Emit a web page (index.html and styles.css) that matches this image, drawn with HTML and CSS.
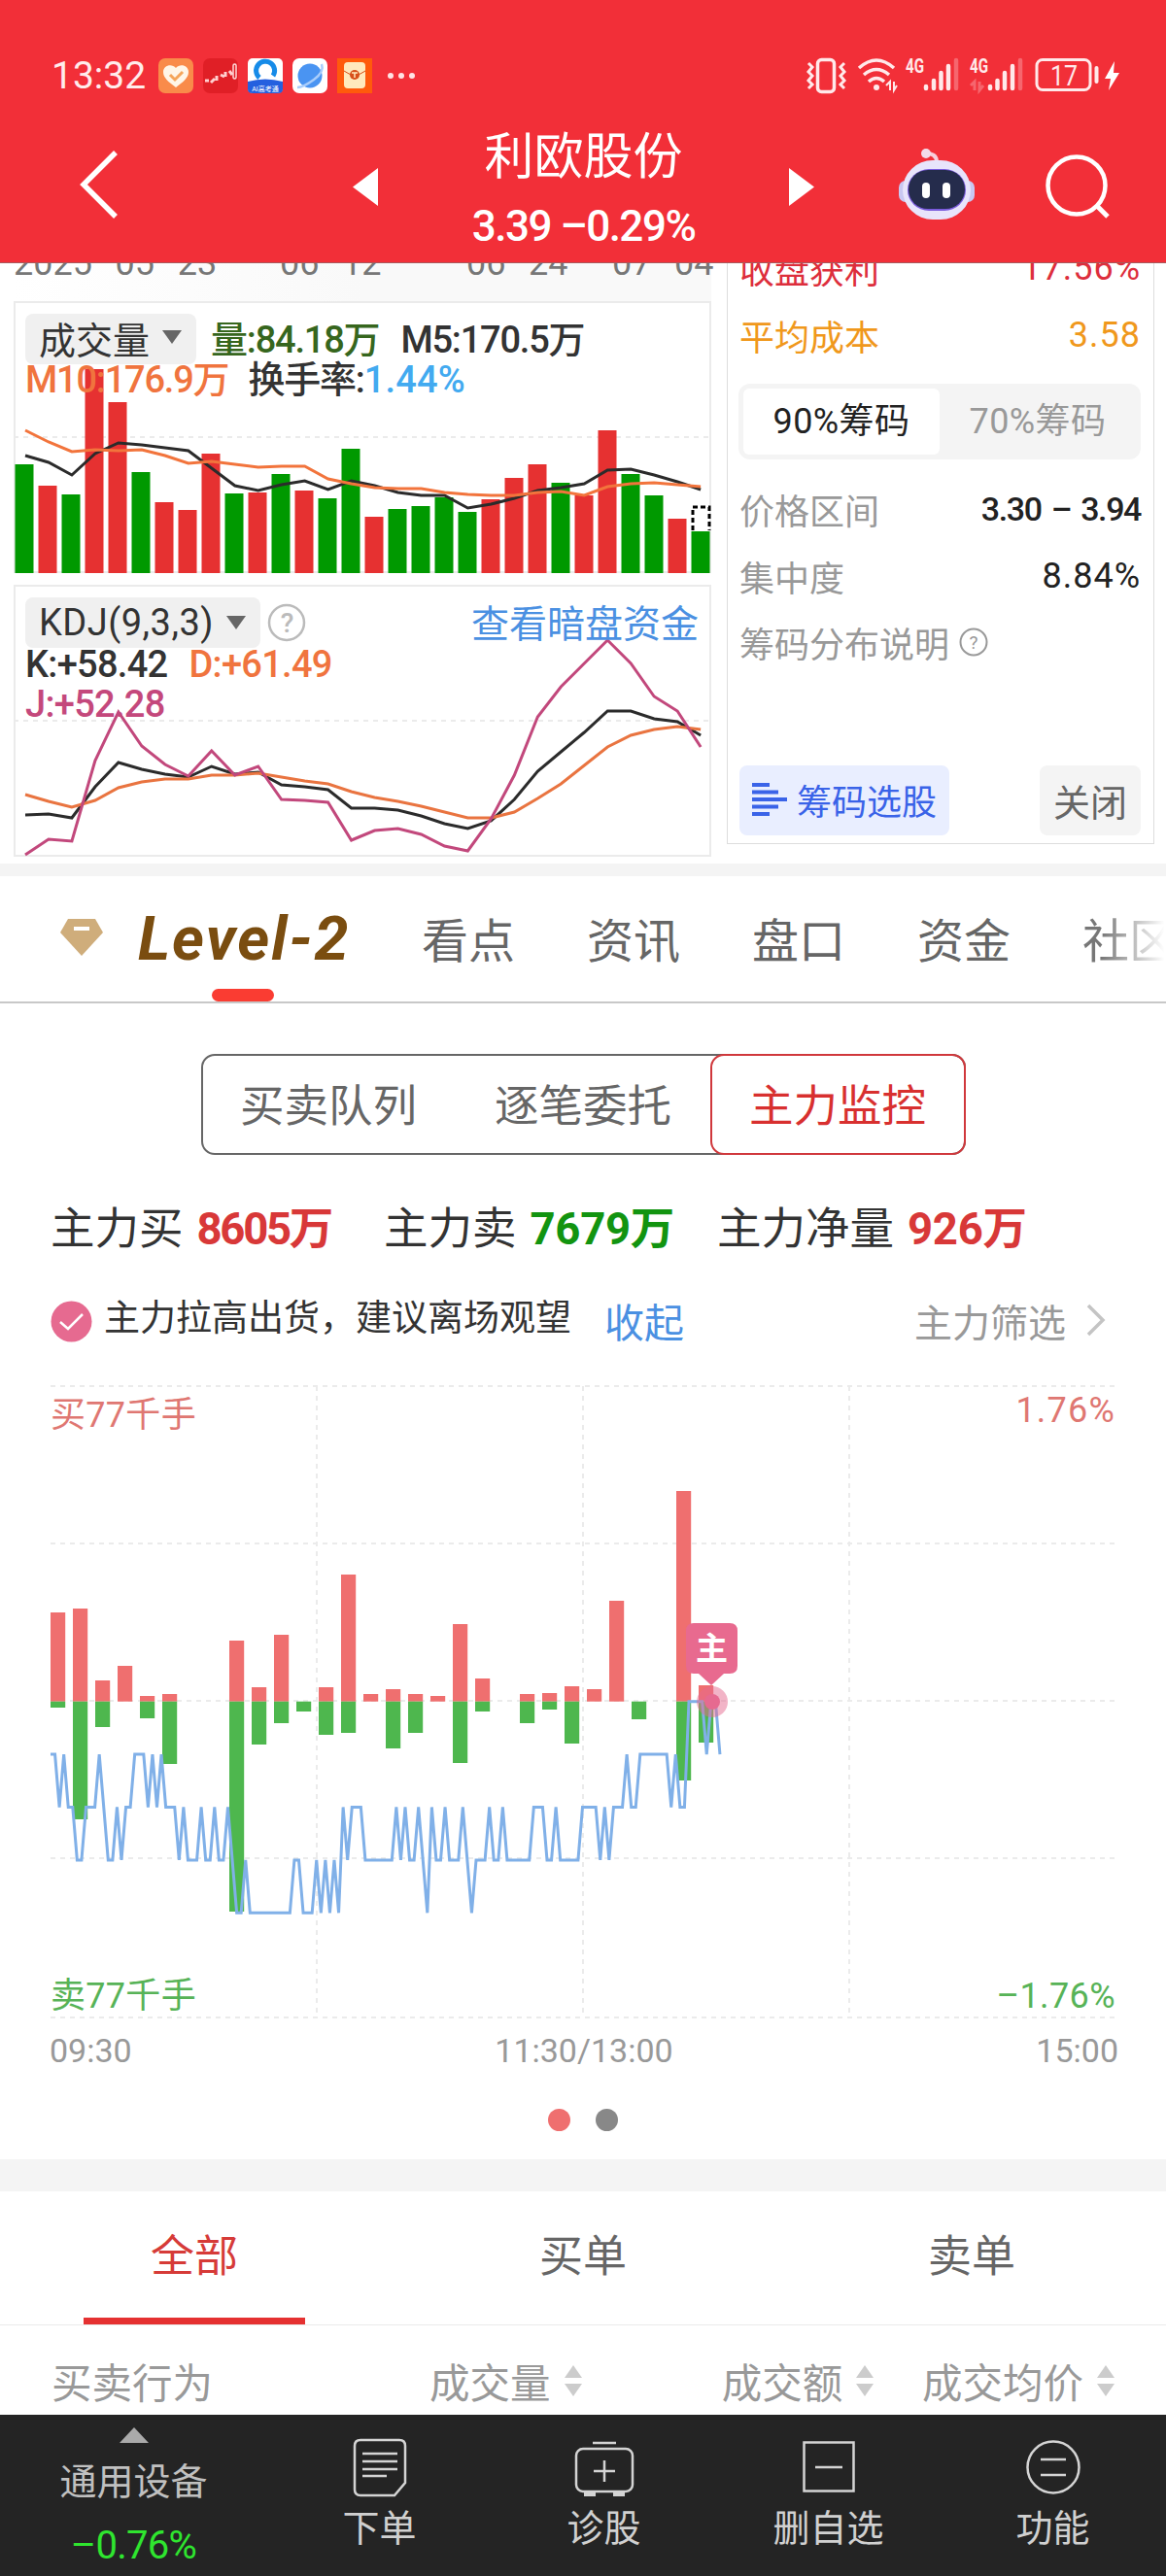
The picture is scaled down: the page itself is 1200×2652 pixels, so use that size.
FILE: index.html
```html
<!DOCTYPE html>
<html lang="zh-CN">
<head>
    <meta charset="UTF-8">
    <meta name="viewport" content="width=device-width, initial-scale=1.0">
    <title>利欧股份</title>
    <link rel="stylesheet" href="styles.css">
</head>
<body>
    <header>
        <div class="status-bar">
            <span class="clock">13:32</span>
            <div class="app-icons">
                <svg width="36" height="36" viewBox="0 0 36 36"><rect width="36" height="36" rx="7" fill="#f98b4a"/><path d="M18 30C10 24 5 20 5 14c0-7 9-9 13-4 4-5 13-3 13 4 0 6-5 10-13 16z" fill="#fff6e8"/><path d="M12 17l5 5 8-8" fill="none" stroke="#f5a55a" stroke-width="3"/></svg>
                <svg width="36" height="36" viewBox="0 0 36 36"><rect width="36" height="36" rx="7" fill="#e01f26"/><path d="M2 23h4M8 25l4-4M14 18v5M18 17l4 2M23 14v5M27 13l3 4" fill="none" stroke="#ffd0d0" stroke-width="3"/><rect x="31" y="6" width="3" height="15" rx="1.500" fill="none" stroke="#ffd9d9" stroke-width="1.500"/></svg>
                <svg width="36" height="36" viewBox="0 0 36 36"><rect width="36" height="36" rx="5" fill="#fff"/><path d="M12 20a9.500 9.500 0 1 1 14-2" fill="none" stroke="#168be8" stroke-width="5"/><path d="M0 24q18-5 36 0v8q0 4-5 4H5q-5 0-5-4z" fill="#2460df"/><text x="18" y="34" text-anchor="middle" class="app-tag">AI高考通</text></svg>
                <svg width="36" height="36" viewBox="0 0 36 36"><rect width="36" height="36" rx="7" fill="#fff"/><circle cx="18" cy="18" r="12.500" fill="#4a94f2"/><path d="M30 6q3 8-8 16T5 30" fill="none" stroke="#a9cdfb" stroke-width="2.500"/></svg>
                <svg width="36" height="36" viewBox="0 0 36 36"><rect width="36" height="36" fill="#ff5a0c"/><rect x="7" y="4" width="22" height="27" rx="4" fill="#ffe9bd"/><path d="M7 13l7 4h8l7-4" fill="none" stroke="#d8501a"/><circle cx="18" cy="17" r="5" fill="#d8501a"/><path d="M15 15h6M18 15v5" stroke="#ffe9bd" stroke-width="1.500"/></svg>
            </div>
            <svg class="more" width="28" height="8" viewBox="0 0 28 8" fill="#ffe3e4"><circle cx="3" cy="4" r="3"/><circle cx="14" cy="4" r="3"/><circle cx="25" cy="4" r="3"/></svg>
            <svg class="signals" width="324" height="40" viewBox="829 58 324 40" fill="none" stroke="#ffe9ea">
                <rect x="841.500" y="61.500" width="17" height="33" rx="4" stroke-width="3.500"/>
                <path d="M832 65l4 4-4 5 4 4-4 5 4 4-4 4M869 65l-4 4 4 5-4 4 4 5-4 4 4 4" stroke-width="3"/>
                <path d="M884 70q18-16 36 0M889 77q13-11 26 0M894 84q8-7 16 0" stroke-width="3.500"/>
                <circle cx="902" cy="90" r="3" fill="#ffe9ea" stroke="none"/>
                <path d="M912 88l4-4v9M920 84v9l3-5" stroke-width="2"/>
                <g stroke-width="4.500" stroke-linecap="round">
                    <path d="M953 89v2M961 83v8M968.500 75v16M976 68v23"/><path d="M984 62v29" opacity=".3"/>
                    <path d="M1019 89v2M1026.500 83v8M1034 75v16M1042 68v23"/><path d="M1050 62v29" opacity=".3"/>
                </g>
                <path d="M999 88l4-4v9M1008 84v9l4-5" stroke-width="3" opacity=".3"/>
                <text x="932" y="75" class="net" textLength="19" lengthAdjust="spacingAndGlyphs">4G</text>
                <text x="998" y="75" class="net" textLength="19" lengthAdjust="spacingAndGlyphs">4G</text>
                <rect x="1067" y="61.500" width="55" height="31" rx="6" stroke-width="3"/>
                <text x="1081" y="88" class="battery" textLength="28" lengthAdjust="spacingAndGlyphs">17</text>
                <path d="M1128.500 70v14" stroke-width="4" stroke-linecap="round"/>
                <path d="M1147 63l-10 18h6l-2 12 11-18h-6z" fill="#fff" stroke="none"/>
            </svg>
        </div>
        <div class="title-bar">
            <svg class="back" width="42" height="72" viewBox="0 0 42 72"><path d="M38 3L5 36l33 33" fill="none" stroke="#fff" stroke-width="5.500"/></svg>
            <svg width="26" height="39" viewBox="0 0 26 39"><path d="M26 0v39L0 19.500z" fill="#fff"/></svg>
            <div class="stock">
                <div class="stock-name">利欧股份</div>
                <div class="stock-price">3.39 –0.29%</div>
            </div>
            <svg width="26" height="39" viewBox="0 0 26 39"><path d="M0 0v39l26-19.500z" fill="#fff"/></svg>
            <svg class="robot" width="80" height="74" viewBox="0 0 80 74">
                <path d="M27 5q13-1 13 9" fill="none" stroke="#f8cdda" stroke-width="4"/><circle cx="29" cy="5" r="5" fill="#f3dcea"/>
                <rect x="1" y="33" width="78" height="22" rx="7" fill="#c9c7f2"/>
                <rect x="5" y="12" width="70" height="61" rx="31" fill="#e8e4fb"/>
                <rect x="10" y="21" width="60" height="43" rx="22" fill="#7a5bdb"/>
                <rect x="11" y="22" width="58" height="40" rx="20" fill="#252c4c"/>
                <rect x="25" y="35" width="8" height="16" rx="4" fill="#fff"/><rect x="46" y="35" width="8" height="16" rx="4" fill="#fff"/>
            </svg>
            <svg class="search" width="68" height="68" viewBox="0 0 68 68" fill="none" stroke="#fff" stroke-width="4.500"><circle cx="33" cy="33" r="29.500"/><path d="M53 53l12 12" stroke-width="5"/></svg>
        </div>
    </header>

    <section class="quotes">
        <div class="charts">
            <div class="dates"><span>2025–05–23</span><span>06–12</span><span>06–24</span><span>07–04</span></div>
            <div class="panel">
                <svg id="volume" width="718" height="280" viewBox="14 310 718 280"></svg>
                <div class="legend">
                    <div class="legend-row">
                        <span class="chip">成交量<i class="caret"></i></span>
                        <span class="c-vol">量:84.18万</span><span class="m5">M5:170.5万</span>
                    </div>
                    <div class="legend-row tight"><span class="c-orange m10">M10:176.9万</span><span>换手率:</span><span class="c-sky">1.44%</span></div>
                </div>
            </div>
            <div class="panel kdj">
                <svg id="kdj" width="718" height="280" viewBox="14 602 718 280"></svg>
                <div class="legend">
                    <div class="legend-row">
                        <span class="chip kdj-name">KDJ(9,3,3)<i class="caret"></i></span>
                        <svg class="help" width="40" height="40" viewBox="0 0 40 40"><circle cx="20" cy="20" r="18" fill="none" stroke="#bbb" stroke-width="2.500"/><text x="20" y="30" text-anchor="middle" font-size="28" fill="#bbb">?</text></svg>
                        <a class="dark-pool">查看暗盘资金</a>
                    </div>
                    <div class="legend-row tight kd"><span>K:+58.42</span><span class="c-orange">D:+61.49</span></div>
                    <div class="legend-row tight kd c-pink">J:+52.28</div>
                </div>
            </div>
        </div>
        <aside class="chips">
            <div class="chips-row c-profit"><span>收盘获利</span><em>17.56%</em></div>
            <div class="chips-row c-cost"><span>平均成本</span><em>3.58</em></div>
            <div class="switch"><span class="on">90%筹码</span><span>70%筹码</span></div>
            <div class="chips-row"><span>价格区间</span><b>3.30 – 3.94</b></div>
            <div class="chips-row"><span>集中度</span><em class="dark">8.84%</em></div>
            <div class="chips-row explain"><span>筹码分布说明</span>
                <svg width="30" height="30" viewBox="0 0 30 30"><circle cx="15" cy="15" r="13.500" fill="none" stroke="#999" stroke-width="2"/><text x="15" y="22" text-anchor="middle" font-size="19" fill="#999">?</text></svg>
            </div>
            <div class="chips-actions">
                <span class="pick"><svg width="36" height="34" viewBox="0 0 36 34" stroke="#3a63e8" stroke-width="4"><path d="M0 2h18M0 9.500h27M0 17h36M0 24.500h27M0 32h18"/></svg>筹码选股</span>
                <span class="close">关闭</span>
            </div>
        </aside>
    </section>

    <nav class="tabs">
        <svg class="gem" width="44" height="40" viewBox="0 0 44 40"><path d="M8 1h28l8 14-22 24L0 15z" fill="#cfad7b"/><path d="M14 11h16" stroke="#fff" stroke-width="4"/></svg>
        <span class="level">Level-2</span>
        <span>看点</span><span>资讯</span><span>盘口</span><span>资金</span><span class="fade">社区</span>
    </nav>

    <section class="monitor">
        <div class="segments"><span>买卖队列</span><span>逐笔委托</span><span class="on">主力监控</span></div>
        <div class="totals">
            <div>主力买<b class="c-red">8605万</b></div>
            <div>主力卖<b class="c-green">7679万</b></div>
            <div>主力净量<b class="c-red">926万</b></div>
        </div>
        <div class="advice">
            <svg width="43" height="43" viewBox="0 0 43 43"><circle cx="21.500" cy="21.500" r="21" fill="#e66a90"/><path d="M10 22l8 7 15-15" fill="none" stroke="#fff" stroke-width="2.500"/></svg>
            <span class="advice-text">主力拉高出货，建议离场观望</span>
            <a>收起</a>
            <span class="filter">主力筛选<svg width="22" height="34" viewBox="0 0 22 34"><path d="M3 2l15 15L3 32" fill="none" stroke="#c4c4c4" stroke-width="3.500"/></svg></span>
        </div>
        <div class="flow">
            <svg id="flow" width="1096" height="654" viewBox="52 1425 1096 654"></svg>
            <span class="corner top-left">买77千手</span><span class="corner top-right">1.76%</span>
            <span class="corner bottom-left">卖77千手</span><span class="corner bottom-right">–1.76%</span>
        </div>
        <div class="axis"><span>09:30</span><span>11:30/13:00</span><span>15:00</span></div>
        <div class="pager"><i class="on"></i><i></i></div>
    </section>

    <section class="orders">
        <div class="order-tabs"><span class="on">全部</span><span>买单</span><span>卖单</span></div>
        <div class="order-head"><span class="act">买卖行为</span><span class="qty">成交量<i class="sort"></i></span><span class="sum">成交额<i class="sort"></i></span><span class="avg">成交均价<i class="sort"></i></span></div>
    </section>

    <footer>
        <div class="sector"><i></i><span>通用设备</span><span class="drop">–0.76%</span></div>
        <div class="action"><svg width="64" height="64" viewBox="0 0 64 64"><path d="M12 4h40q6 0 6 6v38L47 61H12q-6 0-6-6V10q0-6 6-6zM14 18h36M14 26h36M14 34h36M14 41h25"/></svg>下单</div>
        <div class="action"><svg width="64" height="64" viewBox="0 0 64 64"><rect x="3" y="13" width="58" height="44" rx="7"/><path d="M20 7h24M32 25v22M21 36h22"/><path d="M11 60h12M41 60h12" stroke-width="4"/></svg>诊股</div>
        <div class="action"><svg width="64" height="64" viewBox="0 0 64 64"><rect x="6.500" y="6.500" width="51" height="50"/><path d="M18 32h28"/></svg>删自选</div>
        <div class="action"><svg width="64" height="64" viewBox="0 0 64 64"><circle cx="32" cy="32" r="26.500"/><path d="M19 24h26M19 40h26"/></svg>功能</div>
    </footer>

    <script>
        const red = '#e63131', green = '#009900';

        function rect(x, y, w, h, fill) {
            return `<rect x="${x}" y="${y}" width="${w}" height="${h}" fill="${fill}"/>`;
        }

        function dashed(x1, y1, x2, y2) {
            return `<path d="M${x1} ${y1}L${x2} ${y2}" stroke="#ebebeb" stroke-width="2" stroke-dasharray="5 5"/>`;
        }

        function line(values, x0, step, color, width) {
            const points = values.map((v, i) => `${x0 + i * step},${v}`).join(' ');
            return `<polyline points="${points}" fill="none" stroke="${color}" stroke-width="${width}"/>`;
        }

        // volume bars, MA5 and MA10
        const tops = [478,500,509,380,414,486,517,525,467,508,507,488,505,513,462,532,524,521,512,527,514,492,478,497,510,443,488,510,534,547];
        const sides = 'GRGRRGRRRGRGRGGRGGGGRRRGRRGGRG';
        const ma5 = [469,476,489,467,456,458,461,464,482,500,505,499,495,504,495,500,507,510,510,523,519,513,505,502,498,484,483,489,496,504];
        const ma10 = [443,455,465,463,464,463,469,477,475,478,481,480,480,493,498,502,503,503,507,509,510,510,507,506,510,501,498,497,499,501];
        let volume = dashed(14, 450, 731, 450);
        tops.forEach((y, i) => {
            volume += rect(15.5 + i * 24, y, 19, 590 - y, sides[i] === 'R' ? red : green);
        });
        volume += '<path d="M713 546V522h17v24" fill="#fff" stroke="#000" stroke-width="3" stroke-dasharray="5 3"/>';
        volume += line(ma5, 26, 23.97, '#2b2b2b', 3) + line(ma10, 26, 23.97, '#f2743c', 3);
        document.getElementById('volume').innerHTML = volume;

        // KDJ lines
        const k = [839,838,842,810,785,792,797,800,789,797,795,808,810,813,832,832,834,840,848,853,845,823,794,774,754,732,732,740,743,757];
        const d = [818,825,831,824,811,805,802,802,798,798,796,800,804,807,815,821,825,830,836,842,842,836,822,807,788,769,757,751,748,751];
        const j = [880,864,866,783,733,768,787,799,773,798,789,823,824,826,865,855,853,859,871,876,843,798,738,707,683,659,683,717,732,769];
        document.getElementById('kdj').innerHTML = dashed(14, 742, 731, 742) +
            line(k, 26, 23.97, '#2b2b2b', 3) + line(d, 26, 23.97, '#e97440', 3) + line(j, 26, 23.97, '#c2487c', 3);

        // main force buy / sell bars, [slot, top, bottom]
        const zero = 1751.7;
        const bars = [[0,1660,1758],[1,1656,1873],[2,1730,1778],[3,1715,0],[4,1746,1769],[5,1744,1816],[8,1689,1968],[9,1737,1796],[10,1683,1774],[11,0,1762],[12,1737,1786],[13,1621,1784],[14,1744,0],[15,1739,1800],[16,1744,1784],[17,1746,0],[18,1672,1815],[19,1728,1762],[21,1744,1774],[22,1743,1760],[23,1736,1795],[24,1739,0],[25,1648,0],[26,0,1770],[28,1535,1833],[29,1735,1794]];
        let flow = '';
        [1427, 1589, 1751, 1913, 2077].forEach(y => flow += dashed(52, y, 1148, y));
        [326, 600, 874].forEach(x => flow += dashed(x, 1427, x, 2073));
        bars.forEach(([slot, top, bottom]) => {
            const x = 52 + slot * 23;
            if (top) flow += rect(x, top, 15.2, zero - top, '#ef6f6f');
            if (bottom) flow += rect(x, zero, 15.2, bottom - zero, '#4eb74e');
        });

        // price, one digit per minute: number of ticks below yesterday's close
        const ticks = ('11 2 1 22 33 222 1 2 33 2 3 22 111 2 1 2 1 222 3 2 333 2 33 2 33 2 3 44 3 4444444444 33 444 3 4 3 4 3 4 ' +
            '2 3 222 3333333 2 3 2 33 2 3 4 2 33 2 333 2 3 4 333 2 33 2 333333 222 33 2 33333 2222 3 2 3 222 ' +
            '1 22 1111111 2 1 22 0000 1 00 1').replace(/ /g, '');
        flow += line([...ticks].map(t => zero + t * 54.4), 52, 4.5625, '#80b0e8', 3);
        flow += '<circle cx="733" cy="1752" r="16" fill="#e66a90" opacity=".5"/><circle cx="733" cy="1752" r="8" fill="#e66a90"/>' +
            '<path d="M714 1671h37q8 0 8 8v36q0 8-8 8h-6l-13 12-13-12h-5q-8 0-8-8v-36q0-8 8-8z" fill="#e86a8f"/>' +
            '<text x="732.5" y="1709" text-anchor="middle" class="flag">主</text>';
        document.getElementById('flow').innerHTML = flow;
    </script>
</body>
</html>
```
FILE: styles.css
```css
* {
    box-sizing: border-box;
}
body {
    margin: 0;
    width: 1200px;
    height: 2652px;
    overflow: hidden;
    background: #fff;
    color: #333;
    font-family: Roboto, "Noto Sans CJK SC", sans-serif;
}
svg {
    display: block;
    flex: none;
}
i, em {
    font-style: normal;
}

/* header */
header {
    height: 271px;
    background: #f22f38;
    border-bottom: 1px solid #a8585c;
    color: #fff;
}
.status-bar {
    display: flex;
    align-items: center;
    height: 102px;
    padding: 54px 47px 0 53px;
}
.clock {
    width: 110px;
    font-size: 39px;
    color: #ffecec;
}
.app-icons {
    display: flex;
    gap: 10px;
}
.app-tag {
    font-size: 7px;
    fill: #fff;
}
.more {
    margin-left: 16px;
}
.signals {
    margin-left: auto;
}
.net {
    font-size: 20px;
    font-weight: 700;
    fill: #ffe9ea;
    stroke: none;
}
.battery {
    font-size: 30px;
    fill: #ffe9ea;
    stroke: none;
}
.title-bar {
    display: flex;
    align-items: center;
    height: 168px;
    padding: 12px 57px 0 81px;
}
.back {
    margin: 0 240px 4px 0;
}
.stock {
    width: 423px;
    text-align: center;
    margin-top: 6px;
}
.stock-name {
    font-size: 51px;
    line-height: 73px;
    margin-top: 4px;
}
.stock-price {
    font-size: 44px;
    line-height: 71px;
    font-weight: 500;
    letter-spacing: -1.5px;
}
.robot {
    margin: 0 0 4px 86px;
}
.search {
    margin-left: auto;
}

/* daily charts and chip distribution */
.quotes {
    display: flex;
    height: 618px;
    padding-left: 14px;
    overflow: hidden;
}
.charts {
    width: 718px;
}
.dates {
    display: flex;
    height: 39px;
    background: linear-gradient(90deg, #fff 0, #f9f9f9 50%);
    color: #777;
    font-size: 36px;
    line-height: 26px;
    white-space: nowrap;
}
.dates span {
    margin: -13px 0 0 92px;
    width: 100px;
}
.dates span:first-child {
    width: 204px;
    margin-left: 0;
    margin-right: -22px;
}
.dates span:last-child {
    margin-left: 50px;
}
.panel {
    position: relative;
    height: 280px;
    box-shadow: inset 0 0 0 2px #ebebeb;
}
.kdj {
    margin-top: 12px;
}
.legend {
    position: absolute;
    left: 12px;
    top: 13px;
    width: 693px;
    font-size: 38px;
    font-weight: 500;
    letter-spacing: -1.2px;
}
.legend-row {
    display: flex;
    align-items: center;
    height: 52px;
    white-space: nowrap;
}
.legend-row > .c-vol, .m5, .dark-pool {
    padding-bottom: 5px;
}
.tight {
    height: 42px;
    margin-bottom: -1px;
    align-items: flex-start;
    line-height: 33px;
}
.tight .c-sky {
    letter-spacing: 0.2px;
}
.chip {
    display: flex;
    align-items: center;
    height: 52px;
    padding: 0 15px 4px 14px;
    margin-right: 15px;
    border-radius: 8px;
    background: #f0f0f0;
    font-weight: 400;
    letter-spacing: 0;
}
.kdj-name {
    padding-bottom: 0;
    letter-spacing: 0.5px;
}
.caret {
    margin-left: 13px;
    border: 10px solid transparent;
    border-top: 14px solid #666;
    border-bottom: 0;
}
.m5 {
    margin-left: 22px;
}
.m10 {
    margin-right: 20px;
}
.help {
    margin-left: -8px;
}
.dark-pool {
    margin-left: auto;
    color: #4a90e2;
    font-size: 39px;
    font-weight: 400;
    letter-spacing: 0;
}
.kd {
    gap: 22px;
    letter-spacing: -0.7px;
    position: relative;
    top: 1px;
}
.c-vol { color: #36661d; }
.c-orange { color: #f0743e; }
.c-sky { color: #42aaf0; }
.c-pink { color: #c4487c; }
.chips {
    width: 440px;
    height: 628px;
    margin: -30px 0 0 16px;
    padding: 0 13px 0 12px;
    border: 1px solid #ddd;
    font-size: 36px;
    color: #999;
}
.chips-row {
    display: flex;
    align-items: center;
    justify-content: space-between;
    height: 68.5px;
}
.chips-row b {
    color: #222;
    font-size: 34px;
    font-weight: 500;
    letter-spacing: -1.4px;
    word-spacing: 3px;
}
.chips-row em {
    letter-spacing: 1px;
}
.chips-row .dark {
    color: #222;
}
.c-profit { color: #dd2e3c; }
.c-cost { color: #f0981c; }
.switch {
    display: flex;
    height: 78px;
    margin: 16px 0 17px -1px;
    padding: 5px;
    border-radius: 12px;
    background: #f4f4f4;
}
.switch span {
    flex: 1;
    line-height: 68px;
    text-align: center;
    border-radius: 6px;
    letter-spacing: 0.4px;
}
.switch .on {
    background: #fff;
    color: #222;
}
.explain {
    justify-content: flex-start;
    gap: 10px;
}
.chips-actions {
    display: flex;
    justify-content: space-between;
    margin-top: 92px;
}
.pick, .close {
    display: flex;
    align-items: center;
    height: 72px;
    padding: 0 13px 1px;
    border-radius: 8px;
    background: #e9eeff;
    color: #3a63e8;
    gap: 10px;
}
.close {
    padding: 0 14px 1px;
    background: #f4f4f4;
    color: #666;
    font-size: 38px;
}

/* section tabs */
.tabs {
    position: relative;
    display: flex;
    align-items: center;
    height: 144px;
    padding: 0 0 4px 62px;
    border-top: 13px solid #f4f4f4;
    border-bottom: 2px solid #c8c8c8;
    overflow: hidden;
    white-space: nowrap;
    font-size: 48px;
    color: #666;
}
.tabs span {
    width: 96px;
    margin-right: 74px;
    flex: none;
}
.tabs .level {
    width: 221px;
    margin: 4px 71px 0 36px;
    color: #7a4d10;
    font-size: 63px;
    font-style: italic;
    font-weight: 700;
    letter-spacing: 2px;
}
.tabs::after {
    content: "";
    position: absolute;
    left: 218px;
    bottom: 0;
    width: 64px;
    height: 13px;
    border-radius: 7px;
    background: #fa3c32;
}
.tabs .fade {
    margin-right: 0;
    background: linear-gradient(90deg, #777 20%, #fff 88%);
    -webkit-background-clip: text;
    color: transparent;
}

/* main force monitor */
.monitor {
    height: 1190px;
    padding: 52px 52px 0;
}
.segments {
    display: flex;
    width: 787px;
    height: 104px;
    margin: 0 auto;
    border: 2px solid #666;
    border-radius: 14px;
    font-size: 45.500px;
    line-height: 105px;
    text-align: center;
    color: #666;
}
.segments span {
    flex: 1;
}
.segments span:first-child {
    flex: 0 0 259px;
}
.segments .on {
    flex: 0 0 263px;
    margin: -2px;
    border: 2px solid #d0383c;
    border-radius: 14px;
    color: #d8302f;
}
.totals {
    display: flex;
    height: 149px;
    line-height: 153px;
    font-size: 45.500px;
    white-space: nowrap;
}
.totals div {
    width: 343px;
}
.totals b {
    margin-left: 14px;
}
.totals .c-green {
    letter-spacing: -0.3px;
}
.totals .c-red {
    letter-spacing: -2.3px;
}
.totals div:last-child .c-red {
    letter-spacing: -0.3px;
}
.c-red { color: #d83838; }
.c-green { color: #129410; }
.advice {
    display: flex;
    align-items: center;
    height: 44px;
    white-space: nowrap;
}
.advice-text {
    margin: -12px 34px 0 12px;
    font-size: 37px;
}
.advice a {
    margin-top: -3px;
    font-size: 41px;
    color: #4a90e2;
}
.filter {
    display: flex;
    align-items: center;
    gap: 20px;
    margin-top: -3px;
    margin-left: auto;
    margin-right: 9px;
    font-size: 39px;
    color: #999;
}
.flow {
    position: relative;
    margin-top: 43px;
    font-size: 36px;
    line-height: 36px;
}
.corner {
    position: absolute;
    letter-spacing: 0.3px;
}
.top-left { left: 0; top: 14px; color: #df7772; }
.top-right { right: 0; top: 9px; color: #df7772; letter-spacing: 1.2px; }
.bottom-left { left: 0; bottom: 6px; color: #57b357; }
.bottom-right { right: 0; bottom: 6px; color: #57b357; letter-spacing: 0.4px; }
.flag {
    font-size: 33px;
    font-weight: 700;
    fill: #fff;
}
.axis {
    display: flex;
    justify-content: space-between;
    height: 66px;
    margin: 0 -3px 0 -1px;
    line-height: 65px;
    font-size: 34px;
    color: #999;
}
.pager {
    display: flex;
    justify-content: center;
    gap: 26px;
    margin-top: 26px;
}
.pager i {
    width: 23px;
    height: 23px;
    border-radius: 50%;
    background: #888;
}
.pager .on {
    background: #ef6f6f;
}

/* order list */
.orders {
    height: 263px;
    border-top: 33px solid #f4f4f4;
}
.order-tabs {
    display: flex;
    height: 138px;
    border-bottom: 1px solid #ebebeb;
    font-size: 45px;
    line-height: 135px;
    text-align: center;
    color: #666;
}
.order-tabs span {
    flex: 1;
}
.order-tabs .on {
    color: #d63b38;
    background: linear-gradient(#e53131, #e53131) 50% 100% / 228px 7px no-repeat;
}
.order-head {
    display: flex;
    height: 92px;
    padding: 22px 53px 0;
    align-items: center;
    font-size: 41.500px;
    color: #999;
    white-space: nowrap;
}
.order-head span {
    display: flex;
    align-items: center;
    justify-content: flex-end;
    gap: 14px;
}
.act { width: 166px; }
.qty { width: 380px; }
.sum { width: 301px; }
.avg { width: 248px; }
.sort::before, .sort::after {
    content: "";
    display: block;
    border: 9px solid transparent;
    border-bottom: 13px solid #ccc;
    border-top: 0;
}
.sort::after {
    margin-top: 6px;
    transform: rotate(180deg);
}

/* bottom bar */
footer {
    display: flex;
    height: 166px;
    background: #242424;
    color: #d0d0d0;
    font-size: 38px;
}
.sector {
    display: flex;
    flex-direction: column;
    align-items: center;
    width: 275px;
    padding-top: 13px;
    line-height: 65px;
    color: #c0c0c0;
}
.sector i {
    margin-bottom: 8px;
    border: 15px solid transparent;
    border-bottom: 16px solid #aaa;
    border-top: 0;
}
.sector .drop {
    color: #2fe52f;
    font-size: 40px;
    letter-spacing: -0.7px;
}
.action {
    display: flex;
    flex-direction: column;
    align-items: center;
    width: 231px;
    padding-top: 22px;
    line-height: 62px;
}
.action svg {
    fill: none;
    stroke: #d4d4d4;
    stroke-width: 2.500;
}
```
